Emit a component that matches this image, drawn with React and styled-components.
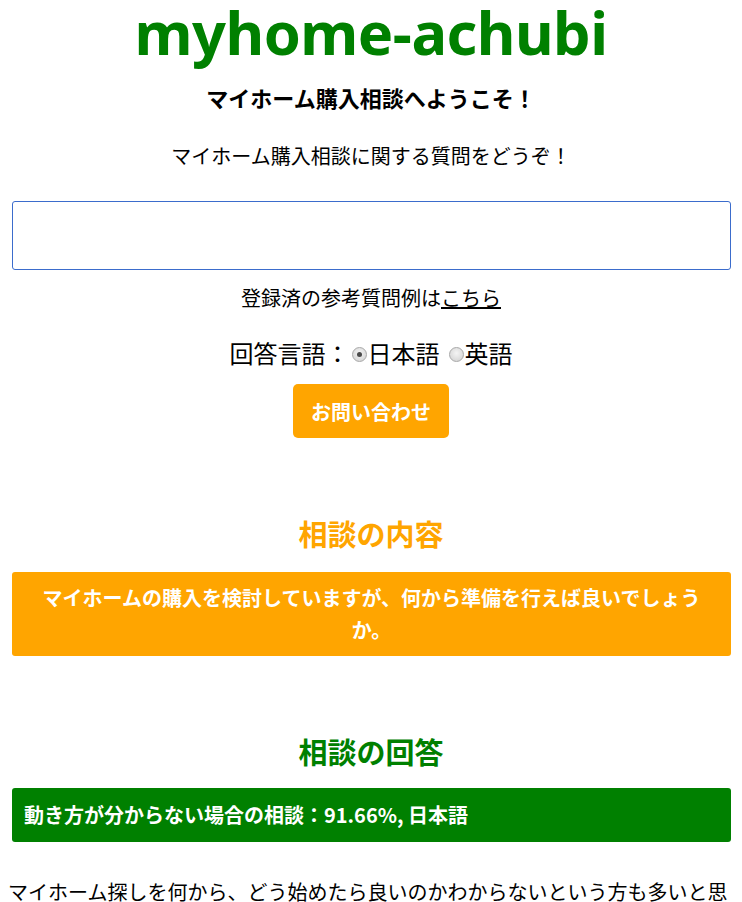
import React, { useState } from 'react';
import styled, { createGlobalStyle } from 'styled-components';

const GlobalStyle = createGlobalStyle`
  body {
    margin: 8px;
    background: #ffffff;
    color: #000000;
    font-family: "Noto Sans CJK JP", "Noto Sans", sans-serif;
  }
`;

const Page = styled.div`
  display: flex;
  flex-direction: column;
  align-items: stretch;
`;

const Logo = styled.h1`
  margin: 0;
  text-align: center;
  font-family: "Noto Sans", "Noto Sans CJK JP", sans-serif;
  font-size: 59.5px;
  line-height: 48px;
  font-weight: 700;
  color: #008000;
  letter-spacing: -0.5px;
`;

const Welcome = styled.h2`
  margin: 26px 0 0;
  text-align: center;
  font-size: 22px;
  line-height: 30px;
  font-weight: 700;
`;

const Lead = styled.p`
  margin: 29px 0 0;
  text-align: center;
  font-size: 20px;
  line-height: 30px;
`;

const QuestionInput = styled.input`
  box-sizing: border-box;
  margin: 30px 3px 0 4px;
  height: 69px;
  padding: 0 10px;
  border: 1.5px solid #3b6ccc;
  border-radius: 3px;
  font-size: 20px;
  font-family: inherit;
  outline: none;
`;

const Hint = styled.p`
  margin: 13px 0 0;
  text-align: center;
  font-size: 20px;
  line-height: 30px;

  a {
    color: #000;
    text-decoration: underline;
  }
`;

const LangRow = styled.div`
  margin-top: 23px;
  display: flex;
  justify-content: center;
  align-items: center;
  font-size: 24px;
  line-height: 34px;
`;

const RadioLabel = styled.label`
  display: inline-flex;
  align-items: center;
  margin-left: ${(p) => (p.$gap ? '7px' : '0')};
`;

const Radio = styled.input`
  appearance: none;
  margin: 2px 1px 0 2px;
  width: 15px;
  height: 15px;
  border-radius: 50%;
  border: 1px solid #a8a8a8;
  background: radial-gradient(circle at 50% 40%, #f4f4f4, #cfcfcf);
  position: relative;

  &:checked::after {
    content: '';
    position: absolute;
    left: 4px;
    top: 4px;
    width: 5px;
    height: 5px;
    border-radius: 50%;
    background: #4a4a4a;
  }
`;

const SubmitButton = styled.button`
  align-self: center;
  margin-top: 14px;
  padding: 0 18px;
  height: 54px;
  border: none;
  border-radius: 5px;
  background: #ffa500;
  color: #ffffff;
  font-family: inherit;
  font-size: 20px;
  font-weight: 700;
`;

const SectionTitle = styled.h3`
  margin: ${(p) => p.$top} 0 0;
  text-align: center;
  font-size: 29px;
  line-height: 40px;
  font-weight: 700;
  color: ${(p) => p.$color};
`;

const Banner = styled.div`
  margin: ${(p) => p.$top} 3px 0 4px;
  border-radius: 3px;
  background: ${(p) => p.$color};
  color: #ffffff;
  font-size: 20px;
  font-weight: 700;
  line-height: 32px;
  text-align: ${(p) => (p.$center ? 'center' : 'left')};
  padding: ${(p) => (p.$center ? '10px 24px' : '11px 12px')};
`;

const Answer = styled.p`
  margin: 34px 0 0;
  font-size: 20px;
  line-height: 32px;
`;

export default function App() {
  const [lang, setLang] = useState('ja');

  return (
    <Page>
      <GlobalStyle />
      <Logo>myhome-achubi</Logo>
      <Welcome>マイホーム購入相談へようこそ！</Welcome>
      <Lead>マイホーム購入相談に関する質問をどうぞ！</Lead>
      <QuestionInput type="text" />
      <Hint>
        登録済の参考質問例は<a href="#">こちら</a>
      </Hint>
      <LangRow>
        回答言語：
        <RadioLabel>
          <Radio type="radio" name="lang" checked={lang === 'ja'} onChange={() => setLang('ja')} />
          日本語
        </RadioLabel>
        <RadioLabel $gap>
          <Radio type="radio" name="lang" checked={lang === 'en'} onChange={() => setLang('en')} />
          英語
        </RadioLabel>
      </LangRow>
      <SubmitButton type="button">お問い合わせ</SubmitButton>

      <SectionTitle $top="75px" $color="#ffa500">相談の内容</SectionTitle>
      <Banner $top="19px" $color="#ffa500" $center>
        マイホームの購入を検討していますが、何から準備を行えば良いでしょうか。
      </Banner>

      <SectionTitle $top="75px" $color="#008000">相談の回答</SectionTitle>
      <Banner $top="17px" $color="#008000">動き方が分からない場合の相談：91.66%, 日本語</Banner>

      <Answer>
        マイホーム探しを何から、どう始めたら良いのかわからないという方も多いと思います。まずは資金計画を立て、希望のエリアや間取りを整理することから始めましょう。
      </Answer>
    </Page>
  );
}
